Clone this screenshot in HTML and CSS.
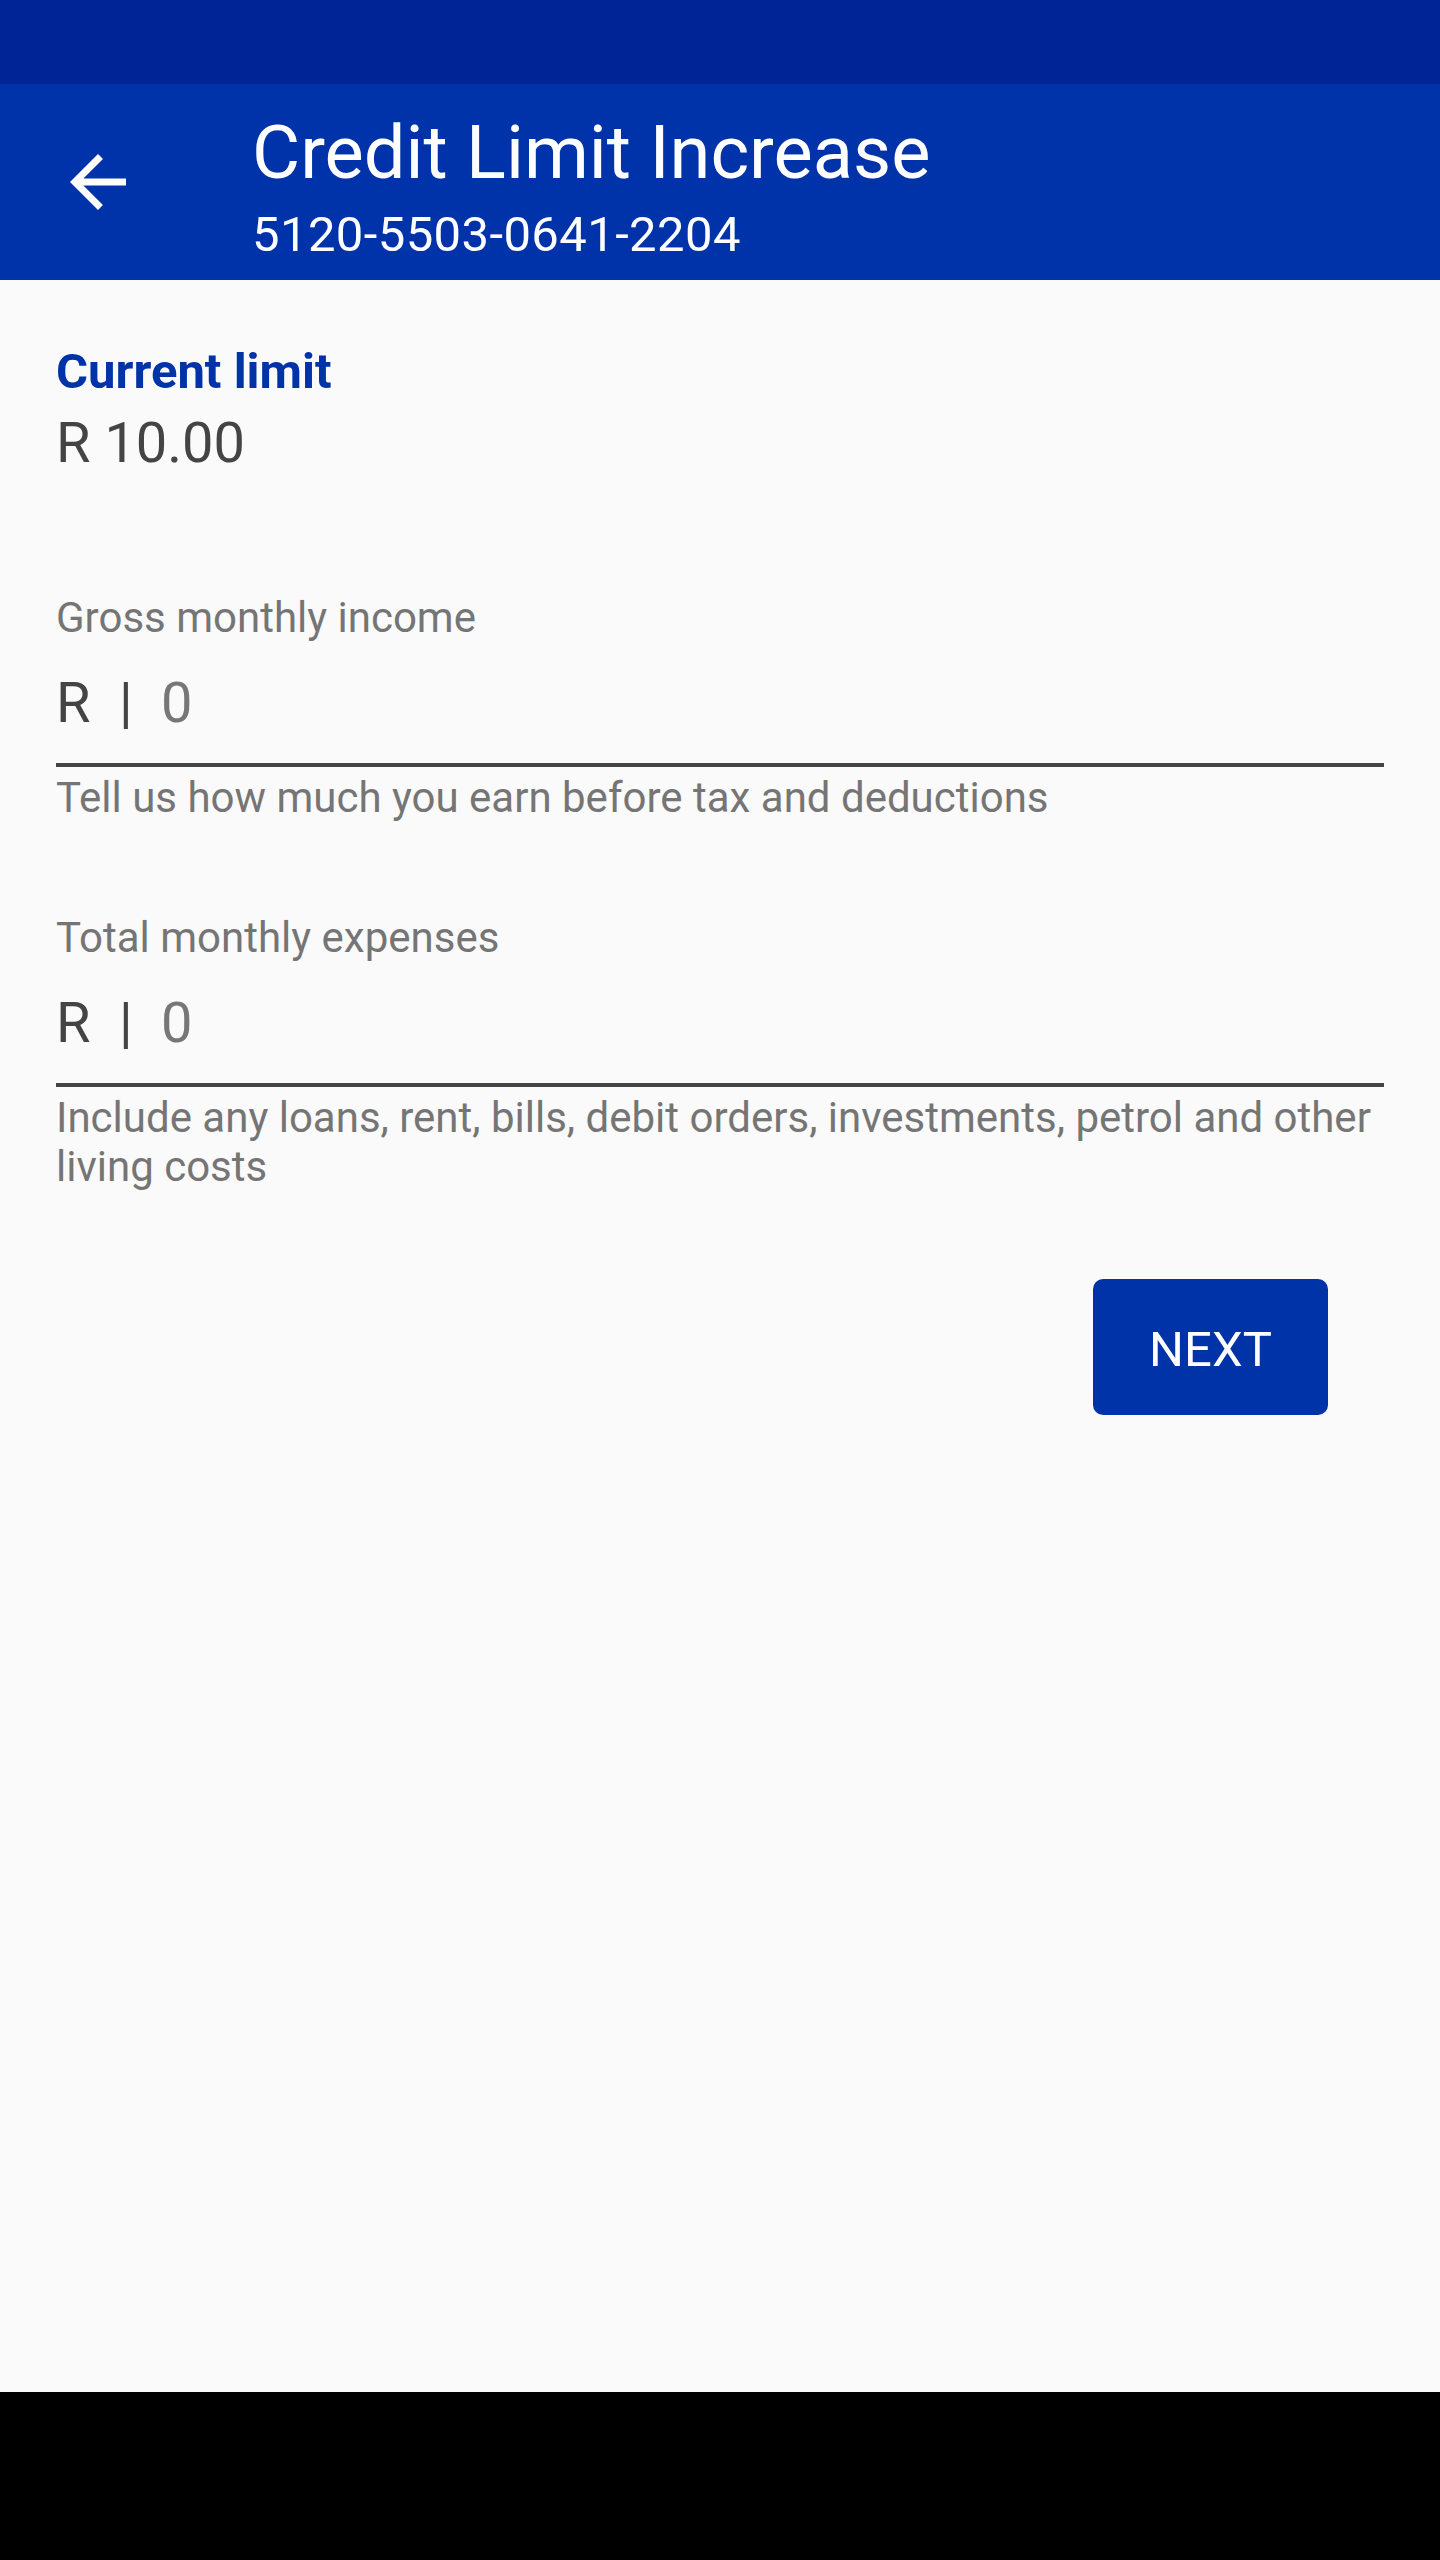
FILE: index.html
```html
<!DOCTYPE html>
<html lang="en">
<head>
<meta charset="utf-8">
<title>Credit Limit Increase</title>
<link rel="stylesheet" href="styles.css">
</head>
<body>
<div class="screen">
  <div class="status-bar"></div>
  <header class="app-bar">
    <button class="back-btn" aria-label="Back">
      <svg viewBox="0 0 24 24" width="84" height="84"><path fill="#ffffff" d="M20 11H7.830l5.590-5.590L12 4l-8 8 8 8 1.410-1.410L7.830 13H20v-2z"/></svg>
    </button>
    <div class="titles">
      <div class="title">Credit Limit Increase</div>
      <div class="subtitle">5120-5503-0641-2204</div>
    </div>
  </header>
  <main class="content">
    <section class="current">
      <div class="current-label">Current limit</div>
      <div class="current-value">R 10.00</div>
    </section>
    <div class="field field-income">
      <label class="field-label">Gross monthly income</label>
      <div class="field-input">
        <span class="prefix">R</span><span class="sep">|</span><input class="amount" type="text" placeholder="0">
      </div>
      <div class="helper">Tell us how much you earn before tax and deductions</div>
    </div>
    <div class="field field-expenses">
      <label class="field-label">Total monthly expenses</label>
      <div class="field-input">
        <span class="prefix">R</span><span class="sep">|</span><input class="amount" type="text" placeholder="0">
      </div>
      <div class="helper">Include any loans, rent, bills, debit orders, investments, petrol and other living costs</div>
    </div>
    <div class="actions">
      <button class="next-btn">NEXT</button>
    </div>
  </main>
  <div class="nav-bar"></div>
</div>
</body>
</html>
```

FILE: styles.css
```css
html, body {
  margin: 0;
  padding: 0;
}
body {
  background: #fafafa;
  font-family: Roboto, "Noto Sans", "Liberation Sans", sans-serif;
}
.screen {
  display: flex;
  flex-direction: column;
  min-height: 2560px;
}
.status-bar {
  height: 84px;
  background: #002396;
}
.app-bar {
  height: 196px;
  background: #0033aa;
  display: flex;
  align-items: flex-start;
  color: #ffffff;
}
.back-btn {
  margin: 56px 0 0 56px;
  width: 84px;
  height: 84px;
  padding: 0;
  border: 0;
  background: transparent;
  display: flex;
}
.titles {
  margin-left: 112px;
  padding-top: 25px;
}
.title {
  font-size: 74px;
  line-height: 87px;
}
.subtitle {
  font-size: 49px;
  line-height: 57px;
  margin-top: 10px;
  letter-spacing: 0.4px;
}
.content {
  flex: 1;
  padding: 63px 56px 0 56px;
  background: #fafafa;
}
.current-label {
  font-size: 49px;
  line-height: 57px;
  font-weight: 700;
  color: #0033a8;
}
.current-value {
  margin-top: 10px;
  font-size: 56px;
  line-height: 66px;
  color: #444444;
}
.field-income {
  margin-top: 117px;
}
.field-expenses {
  margin-top: 91px;
}
.field-label {
  display: block;
  font-size: 42px;
  line-height: 49px;
  color: #757575;
}
.field-input {
  margin-top: 28px;
  display: flex;
  align-items: flex-start;
  padding-bottom: 27px;
  border-bottom: 4px solid #444444;
  font-size: 56px;
  line-height: 66px;
  color: #444444;
}
.prefix {
  width: 63px;
}
.sep {
  width: 42px;
}
.amount {
  flex: 1;
  border: 0;
  outline: 0;
  background: transparent;
  padding: 0;
  margin: 0;
  font-family: inherit;
  font-size: 56px;
  line-height: 66px;
  height: 66px;
  color: #444444;
}
.amount::placeholder {
  color: #777777;
}
.helper {
  margin-top: 6px;
  font-size: 42px;
  line-height: 49px;
  color: #757575;
}
.actions {
  display: flex;
  justify-content: flex-end;
  margin-top: 88px;
  padding-right: 56px;
}
.next-btn {
  width: 235px;
  height: 136px;
  border: 0;
  border-radius: 10px;
  background: #0033a8;
  color: #ffffff;
  font-family: inherit;
  font-size: 49px;
  padding: 4px 0 0 0;
}
.nav-bar {
  height: 168px;
  background: #000000;
}
```
